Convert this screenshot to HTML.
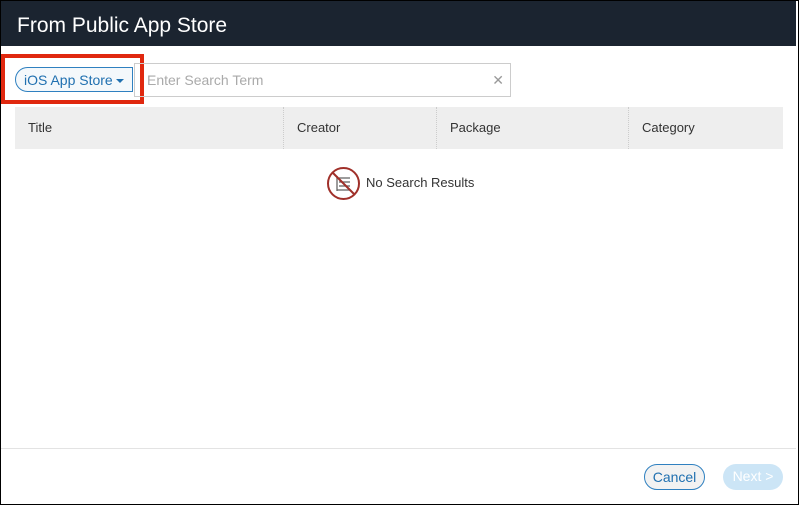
<!DOCTYPE html>
<html><head><style>
body{margin:0;width:799px;height:505px;overflow:hidden;background:#fff;font-family:"Liberation Sans",sans-serif;}
.frame{position:absolute;left:0;top:0;width:797px;height:503px;border:1px solid #000;background:#fff}
.hdr{position:absolute;left:1px;top:1px;width:795px;height:45px;background:#1b2430;color:#fff;font-size:21px;line-height:50px;padding-left:16px;box-sizing:border-box}
.dd{position:absolute;left:15px;top:67px;width:118px;height:25px;border:1px solid #2f80c0;border-radius:13px 0 0 13px;color:#2070b0;font-size:14px;line-height:25px;padding-left:8px;box-sizing:border-box;background:#f4f8fb}
.tri{display:inline-block;border-left:4px solid transparent;border-right:4px solid transparent;border-top:4px solid #2070b0;vertical-align:middle;margin-left:3px}
.red{position:absolute;left:1px;top:54px;width:143px;height:50px;border:4px solid #e0280f;box-sizing:border-box}
.inp{position:absolute;left:134px;top:63px;width:377px;height:34px;border:1px solid #ccc;box-sizing:border-box;color:#aaa;font-size:14px;line-height:33px;padding-left:12px}
.x{position:absolute;right:6px;top:0;color:#999;font-size:14px}
.th{position:absolute;left:15px;top:107px;width:768px;height:42px;background:#eee;font-size:13px;color:#333}
.th div{position:absolute;top:0;height:42px;line-height:42px;padding-left:13px;border-left:1px dotted #ccc;box-sizing:border-box}
.nr{position:absolute;left:366px;top:175px;font-size:13px;color:#333}
.foot{position:absolute;left:1px;top:448px;width:795px;border-top:1px solid #e3e3e3}
.btn{position:absolute;top:464px;height:26px;border-radius:13px;font-size:14px;line-height:25px;text-align:center;box-sizing:border-box}
</style></head><body>
<div class="frame"></div>
<div class="hdr">From Public App Store</div>
<div class="dd">iOS App Store<span class="tri"></span></div>
<div class="red"></div>
<div class="inp">Enter Search Term<span class="x">✕</span></div>
<div class="th">
<div style="left:0;border-left:none;width:268px">Title</div>
<div style="left:268px;width:153px">Creator</div>
<div style="left:421px;width:192px">Package</div>
<div style="left:613px;width:155px">Category</div>
</div>
<svg style="position:absolute;left:326px;top:166px" width="35" height="35" viewBox="0 0 35 35">
<circle cx="17.5" cy="17.5" r="15.5" fill="none" stroke="#a0302a" stroke-width="2"/>
<g stroke="#666" stroke-width="1.3"><line x1="11" y1="10" x2="11" y2="25"/><line x1="13" y1="12" x2="24" y2="12"/><line x1="13" y1="16" x2="24" y2="16"/><line x1="13" y1="20" x2="24" y2="20"/><line x1="11" y1="24" x2="24" y2="24"/></g>
<line x1="7" y1="7" x2="28" y2="28" stroke="#a0302a" stroke-width="2"/>
</svg>
<div class="nr">No Search Results</div>
<div class="foot"></div>
<div class="btn" style="left:644px;width:61px;border:1px solid #2f80c0;color:#2070b0;background:#f2f2f2">Cancel</div>
<div class="btn" style="left:723px;width:60px;background:#cce5f6;color:#fff">Next &gt;</div>
</body></html>
